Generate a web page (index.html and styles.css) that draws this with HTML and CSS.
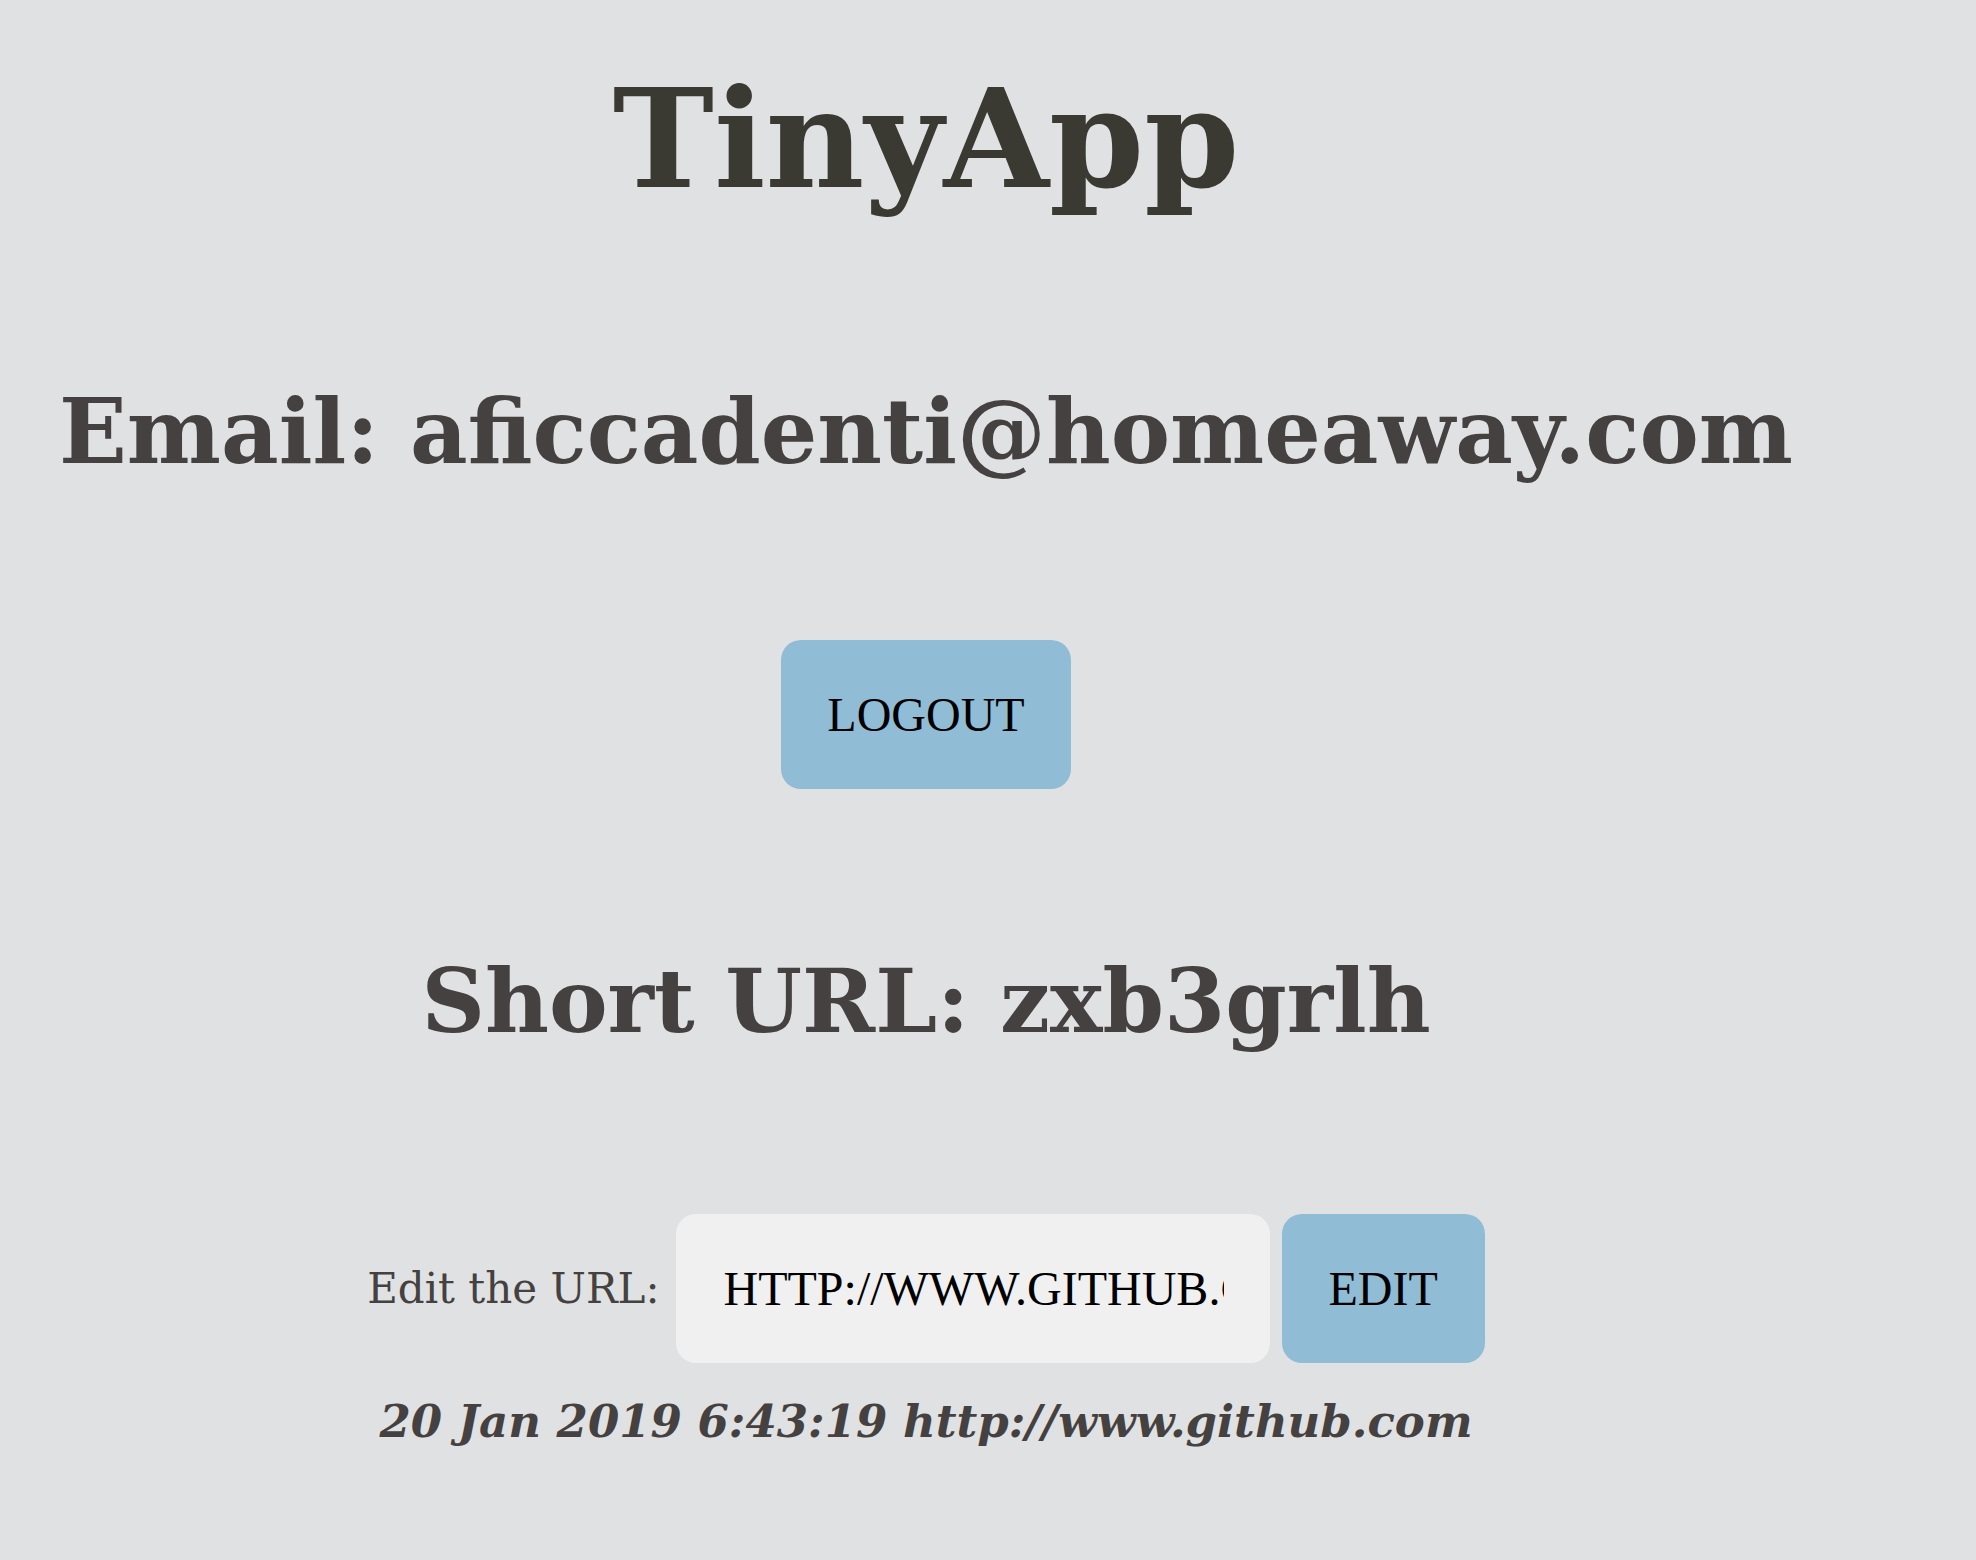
FILE: index.html
```html
<!DOCTYPE html>
<html>
<head>
<meta charset="utf-8">
<title>TinyApp</title>
<link rel="stylesheet" href="styles.css">
</head>
<body>
<main class="page">
  <h1 class="brand">TinyApp</h1>
  <h2 class="email">Email: aficcadenti@homeaway.com</h2>
  <form class="logout-form">
    <button type="button" class="btn btn-logout">LOGOUT</button>
  </form>
  <h2 class="short">Short URL: zxb3grlh</h2>
  <form class="edit-form">
    <label class="edit-label" for="longURL">Edit the URL:</label>
    <input id="longURL" class="edit-input" type="text" value="http://www.github.com">
    <button type="button" class="btn btn-edit">EDIT</button>
  </form>
  <p class="meta">20 Jan 2019 6:43:19 http://www.github.com</p>
</main>
</body>
</html>
```
FILE: styles.css
```css
html, body {
  margin: 0;
  padding: 0;
  background: #e0e1e3;
}

body {
  font-family: "DejaVu Serif", "Liberation Serif", serif;
  color: #454140;
}

.page {
  width: 1852px;
  display: flex;
  flex-direction: column;
  align-items: center;
  text-align: center;
  padding-top: 71px;
  padding-bottom: 60px;
}

.brand {
  margin: 0;
  font-size: 136px;
  line-height: 1;
  font-weight: bold;
  color: #3a3a32;
}

.email {
  margin: 180px 0 0;
  font-size: 89px;
  line-height: 1;
  font-weight: bold;
}

.logout-form {
  margin: 164px 0 0;
}

.btn {
  font-family: "Liberation Serif", "Times New Roman", serif;
  font-size: 48px;
  color: #000;
  background: #91bcd5;
  border: none;
  border-radius: 20px;
  height: 149px;
  padding: 0 46px;
  cursor: pointer;
}

.short {
  margin: 168px 0 0;
  font-size: 88px;
  line-height: 1;
  font-weight: bold;
}

.edit-form {
  margin: 169px 0 0;
  display: flex;
  align-items: center;
}

.edit-label {
  font-size: 42px;
  margin-right: 16px;
}

.edit-input {
  box-sizing: border-box;
  width: 594px;
  height: 149px;
  padding: 0 46px 0 48px;
  border: none;
  border-radius: 20px;
  background: #f0f0f0;
  font-family: "Liberation Serif", "Times New Roman", serif;
  font-size: 48px;
  color: #000;
  text-transform: uppercase;
  outline: none;
}

.btn-edit {
  margin-left: 12px;
  padding: 0 47px;
}

.meta {
  margin: 30px 0 0;
  font-size: 45px;
  line-height: 1.3;
  font-weight: bold;
  font-style: italic;
}
```
